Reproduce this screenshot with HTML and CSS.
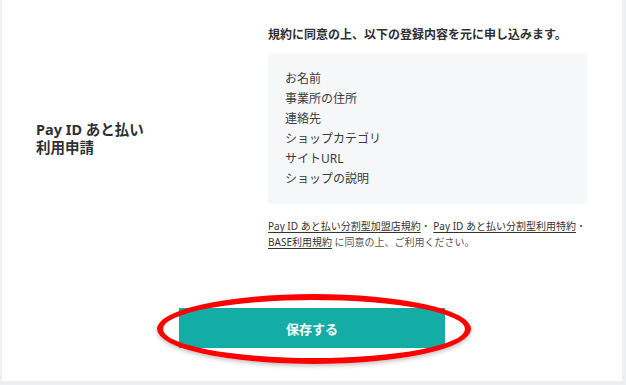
FILE: index.html
```html
<!DOCTYPE html>
<html lang="ja">
<head>
<meta charset="utf-8">
<link rel="stylesheet" href="styles.css">
</head>
<body>
<div class="frame">
  <main class="main">
    <section class="row">
      <div class="label"><span class="label-line">Pay ID あと払い</span><span class="label-line">利用申請</span></div>
      <div class="content">
        <p class="lead">規約に同意の上、以下の登録内容を元に申し込みます。</p>
        <ul class="fields">
          <li>お名前</li>
          <li>事業所の住所</li>
          <li>連絡先</li>
          <li>ショップカテゴリ</li>
          <li>サイトURL</li>
          <li>ショップの説明</li>
        </ul>
        <p class="note"><a href="#">Pay ID あと払い分割型加盟店規約</a>・ <a href="#">Pay ID あと払い分割型利用特約</a>・<br><a href="#">BASE利用規約</a> に同意の上、ご利用ください。</p>
      </div>
    </section>
    <div class="actions">
      <button class="save" type="button">保存する</button>
      <span class="mark"></span>
    </div>
  </main>
  <div class="side"></div>
</div>
</body>
</html>
```

FILE: styles.css
```css
* { box-sizing: border-box; }
html, body { margin: 0; padding: 0; }
body {
  width: 626px;
  height: 385px;
  overflow: hidden;
  background: #eeeff3;
  font-family: "Noto Sans", "Noto Sans CJK JP", sans-serif;
  color: #333;
}
.frame {
  display: flex;
  height: 381px;
  padding-left: 2px;
}
.main {
  width: 620px;
  height: 381px;
  background: #fff;
  padding-top: 26px;
}
.side { flex: 1; }
.row {
  display: flex;
  align-items: center;
}
.label {
  width: 266px;
  padding-left: 34px;
  display: flex;
  flex-direction: column;
  font-size: 14.5px;
  font-weight: 700;
  line-height: 18px;
  color: #2f3033;
}
.label-line { display: block; height: 18px; }
.content { width: 322px; }
.lead {
  margin: 0 0 9px;
  font-size: 12px;
  line-height: 18px;
  font-weight: 700;
  color: #2f3033;
}
.fields {
  list-style: none;
  margin: 0;
  width: 319px;
  padding: 16px 17px 15px;
  background: #f6f7f9;
  border-radius: 4px;
  font-size: 12px;
  line-height: 20px;
  color: #3a3b3e;
}
.note {
  margin: 14px 0 0;
  font-size: 10px;
  line-height: 16px;
  color: #555;
  white-space: nowrap;
}
.note a {
  color: #333;
  text-decoration: underline;
  text-underline-offset: 2px;
}
.actions {
  position: relative;
  display: flex;
  justify-content: center;
  margin-top: 58px;
}
.save {
  width: 266px;
  height: 40px;
  border: 0;
  border-radius: 0;
  background: #13ada6;
  color: #fff;
  font-family: inherit;
  font-size: 13px;
  font-weight: 700;
}
.mark {
  position: absolute;
  left: 155px;
  top: -14px;
  width: 314px;
  height: 70px;
  border: 6px solid #f00;
  border-radius: 50%;
  box-shadow: 0 2px 4px rgba(0,0,0,0.25);
  pointer-events: none;
}
```
